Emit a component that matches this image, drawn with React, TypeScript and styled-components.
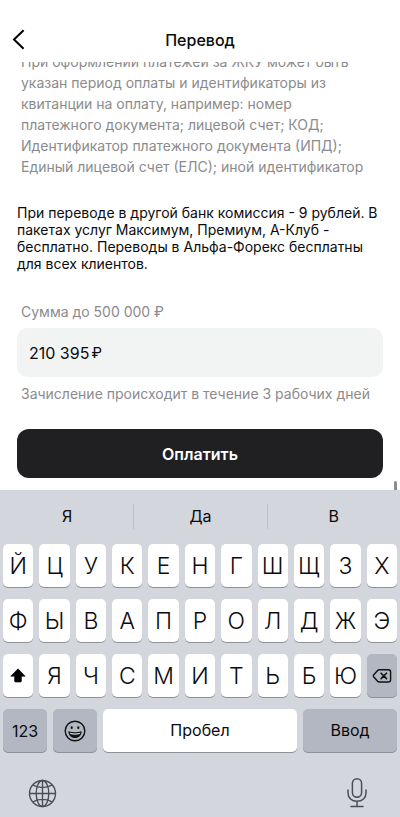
import React, { useState } from "react";
import styled, { createGlobalStyle, css } from "styled-components";

const GlobalStyle = createGlobalStyle`
  *, *::before, *::after { box-sizing: border-box; }
  body {
    margin: 0;
    background: #fff;
    color: #0b0b0c;
    font-family: Inter, "Noto Sans", sans-serif;
  }
  button, input { font: inherit; color: inherit; }
  p { margin: 0; }
`;

const Screen = styled.div`
  display: flex;
  flex-direction: column;
  height: 100vh;
  overflow: hidden;
`;

const Header = styled.header`
  display: grid;
  grid-template-columns: 40px 1fr 40px;
  align-items: center;
  flex: none;
  padding: 18px 0 0;
  height: 62px;
`;

const BackButton = styled.button`
  display: flex;
  align-items: center;
  height: 40px;
  padding: 0 0 2px 12px;
  border: 0;
  background: none;
`;

const Title = styled.h1`
  margin: 0;
  text-align: center;
  font-size: 16px;
  line-height: 20px;
  font-weight: 500;
`;

const Content = styled.main`
  position: relative;
  flex: 1;
  min-height: 0;
  overflow: hidden;
  display: flex;
  flex-direction: column;
  justify-content: flex-end;
  padding: 0 17px 12px;
`;

const ScrollThumb = styled.div`
  position: absolute;
  right: 3px;
  bottom: 0;
  width: 3px;
  height: 9px;
  background: #8b8b8e;
  border-radius: 2px 2px 0 0;
`;

const Hint = styled.p`
  padding: 0 4px;
  color: #8b8b8d;
  font-size: 14px;
  line-height: 21px;
  white-space: nowrap;
`;

const Notice = styled.p`
  margin: 27px 0 30px;
  font-size: 14px;
  line-height: 17px;
  white-space: nowrap;
`;

const FieldLabel = styled.label`
  padding: 0 4px;
  color: #8b8b8d;
  font-size: 14px;
  line-height: 20px;
`;

const Field = styled.div`
  display: flex;
  align-items: center;
  flex: none;
  height: 49px;
  margin: 6px 0 7px;
  padding: 0 12px;
  border-radius: 10px;
  background: #f2f4f4;
  font-size: 16px;
  line-height: 20px;
`;

const AmountInput = styled.input`
  field-sizing: content;
  padding: 0;
  border: 0;
  outline: 0;
  background: none;
`;

const Currency = styled.span`
  margin-left: 2px;
  font-size: 15px;
`;

const FieldNote = styled.p`
  padding: 0 4px;
  color: #8b8b8d;
  font-size: 14px;
  line-height: 20px;
  white-space: nowrap;
`;

const PayButton = styled.button`
  flex: none;
  height: 49px;
  margin-top: 25px;
  border: 0;
  border-radius: 12px;
  background: #202023;
  color: #fff;
  font-size: 16px;
  font-weight: 600;
`;

const Keyboard = styled.section`
  flex: none;
  background: #d3d6dc;
`;

const Suggestions = styled.div`
  display: grid;
  grid-template-columns: repeat(3, 1fr);
  padding: 14px 0 15px;
`;

const Suggestion = styled.button`
  height: 25px;
  padding: 0;
  border: 0;
  border-left: 1px solid #bcc0c7;
  background: none;
  font-size: 16px;
  line-height: 25px;
  &:first-child { border-left-color: transparent; }
`;

const Keys = styled.div`
  display: grid;
  gap: 12px;
  padding: 0 3px;
`;

const KeyRow = styled.div`
  display: flex;
  gap: 6px;
`;

type KeyKind = "letter" | "word" | "number";

const Key = styled.button<{ $dark?: boolean; $grow?: number; $kind?: KeyKind }>`
  display: flex;
  align-items: center;
  justify-content: center;
  flex: ${(p) => p.$grow ?? 1} 1 0;
  min-width: 0;
  height: 43px;
  padding: 0;
  border: 0;
  border-radius: 5px;
  background: ${(p) => (p.$dark ? "#b2b7c2" : "#fff")};
  box-shadow: 0 1px 0 #8e9197;
  font-size: 23px;
  font-weight: 300;
  ${(p) => p.$kind === "word" && css`font-size: 16px; font-weight: 400; padding-bottom: 2px;`}
  ${(p) => p.$kind === "number" && css`font-size: 16px; font-weight: 400;`}
`;

const KeyboardFooter = styled.div`
  display: flex;
  align-items: center;
  justify-content: space-between;
  padding: 25px 28px 8px;
`;

const ToolButton = styled.button`
  display: flex;
  padding: 0;
  border: 0;
  background: none;
  color: #4b4e54;
`;

const ShiftIcon = () => (
  <svg width="16" height="15" viewBox="0 0 16 15" aria-hidden="true">
    <path d="M8 .8 15.2 8.2H11.4V13Q11.4 14 10.4 14H5.6Q4.6 14 4.6 13V8.2H.8Z" fill="#000" stroke="#000" strokeWidth=".6" strokeLinejoin="round" />
  </svg>
);

const DeleteIcon = () => (
  <svg width="20" height="16" viewBox="0 0 20 16" fill="none" stroke="#111" strokeWidth="1.4" strokeLinecap="round" strokeLinejoin="round" aria-hidden="true">
    <path d="M7.2 1.8H16.3Q18.6 1.8 18.6 4.1V11.7Q18.6 14 16.3 14H7.2Q6.3 14 5.6 13.3L1.6 8.8Q.9 7.9 1.6 7L5.6 2.5Q6.3 1.8 7.2 1.8Z" />
    <path d="m9.1 5.2 5.4 5.4m0-5.4-5.4 5.4" strokeWidth="1.6" />
  </svg>
);

const SmileIcon = () => (
  <svg width="22" height="22" viewBox="0 0 22 22" fill="none" aria-hidden="true">
    <circle cx="11" cy="11" r="9.8" stroke="#111" strokeWidth="1.4" />
    <ellipse cx="7.7" cy="7.7" rx="1.1" ry="1.4" fill="#111" />
    <ellipse cx="14.3" cy="7.7" rx="1.1" ry="1.4" fill="#111" />
    <path d="M4.3 11.2Q11 13.2 17.7 11.2C17.5 15.4 14.8 18 11 18S4.5 15.4 4.3 11.2Z" fill="#111" />
    <path d="M5.7 12.7Q11 14.2 16.3 12.7L15.7 14.1Q11 15.3 6.3 14.1Z" fill="#d9dce3" />
  </svg>
);

const GlobeIcon = () => (
  <svg width="29" height="29" viewBox="0 0 29 29" fill="none" stroke="currentColor" strokeWidth="1.4" aria-hidden="true">
    <circle cx="14.5" cy="14.5" r="13" />
    <ellipse cx="14.5" cy="14.5" rx="6.3" ry="13" />
    <path d="M14.5 1.5V27.5M1.5 14.5H27.5M4.9 6.2Q14.5 11 24.1 6.2M4.9 22.8Q14.5 18 24.1 22.8" />
  </svg>
);

const MicIcon = () => (
  <svg width="30" height="32" viewBox="0 0 30 32" fill="none" stroke="currentColor" strokeWidth="1.5" strokeLinecap="round" aria-hidden="true">
    <rect x="10.4" y="1.8" width="9.2" height="18.4" rx="4.6" />
    <path d="M6 13V15.8C6 21 9.7 24.3 15 24.3S24 21 24 15.8V13M15 24.3V29.4M9 29.4H21" />
  </svg>
);

const BackIcon = () => (
  <svg width="13" height="21" viewBox="0 0 13 21" fill="none" stroke="#000" strokeWidth="2" aria-hidden="true">
    <path d="M11.6 1.2 2 10.5 11.6 19.8" />
  </svg>
);

const topRow = [..."ЙЦУКЕНГШЩЗХ"];
const middleRow = [..."ФЫВАПРОЛДЖЭ"];
const bottomRow = [..."ЯЧСМИТЬБЮ"];

const letters = (row: string[]) => row.map((letter) => <Key key={letter} type="button">{letter}</Key>);

export default function App() {
  const [amount, setAmount] = useState("210 395");

  return (
    <>
      <GlobalStyle />
      <Screen>
        <Header>
          <BackButton type="button" aria-label="Назад"><BackIcon /></BackButton>
          <Title>Перевод</Title>
        </Header>
        <Content>
          <Hint>
            При оформлении платежей за ЖКУ может быть<br />
            указан период оплаты и идентификаторы из<br />
            квитанции на оплату, например: номер<br />
            платежного документа; лицевой счет; КОД;<br />
            Идентификатор платежного документа (ИПД);<br />
            Единый лицевой счет (ЕЛС); иной идентификатор
          </Hint>
          <Notice>
            При переводе в другой банк комиссия - 9 рублей. В<br />
            пакетах услуг Максимум, Премиум, А-Клуб -<br />
            бесплатно. Переводы в Альфа-Форекс бесплатны<br />
            для всех клиентов.
          </Notice>
          <FieldLabel htmlFor="amount">Сумма до 500 000 ₽</FieldLabel>
          <Field>
            <AmountInput id="amount" inputMode="numeric" value={amount} onChange={(e) => setAmount(e.target.value)} />
            <Currency>₽</Currency>
          </Field>
          <FieldNote>Зачисление происходит в течение 3 рабочих дней</FieldNote>
          <PayButton type="button">Оплатить</PayButton>
          <ScrollThumb />
        </Content>
        <Keyboard aria-label="Клавиатура">
          <Suggestions>
            <Suggestion type="button">Я</Suggestion>
            <Suggestion type="button">Да</Suggestion>
            <Suggestion type="button">В</Suggestion>
          </Suggestions>
          <Keys>
            <KeyRow>{letters(topRow)}</KeyRow>
            <KeyRow>{letters(middleRow)}</KeyRow>
            <KeyRow>
              <Key type="button" aria-label="Shift"><ShiftIcon /></Key>
              {letters(bottomRow)}
              <Key type="button" $dark aria-label="Удалить"><DeleteIcon /></Key>
            </KeyRow>
            <KeyRow>
              <Key type="button" $dark $grow={44} $kind="number">123</Key>
              <Key type="button" $dark $grow={44} aria-label="Эмодзи"><SmileIcon /></Key>
              <Key type="button" $grow={194} $kind="word">Пробел</Key>
              <Key type="button" $dark $grow={94} $kind="word">Ввод</Key>
            </KeyRow>
          </Keys>
          <KeyboardFooter>
            <ToolButton type="button" aria-label="Сменить язык"><GlobeIcon /></ToolButton>
            <ToolButton type="button" aria-label="Диктовка"><MicIcon /></ToolButton>
          </KeyboardFooter>
        </Keyboard>
      </Screen>
    </>
  );
}
